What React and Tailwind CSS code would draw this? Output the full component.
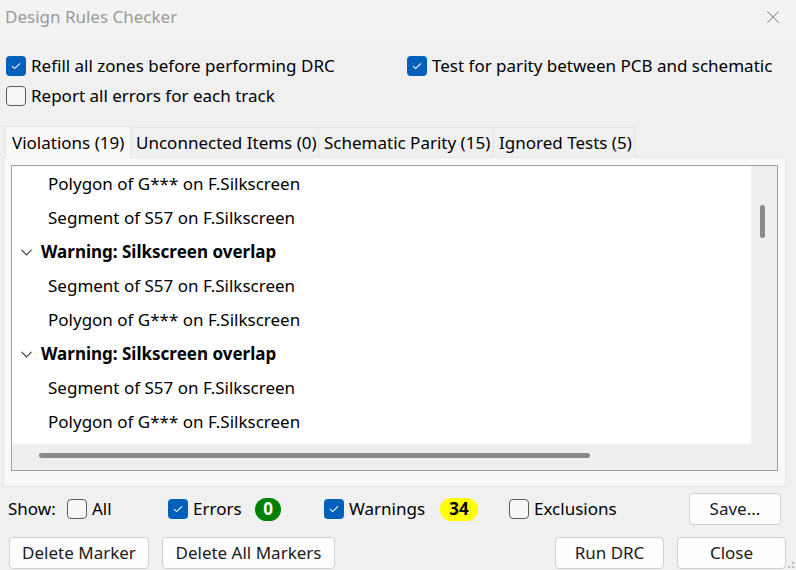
import { ChevronDown, X } from 'lucide-react'

const FONT = { fontFamily: '"Noto Sans", "Open Sans", sans-serif' }

function Box({ checked }) {
  if (checked) return (
    <span className="w-[20px] h-[20px] rounded-[4px] bg-[#005fb8] flex items-center justify-center shrink-0">
      <svg width="12" height="10" viewBox="0 0 12 10" fill="none">
        <path d="M2 5.2 L4.6 7.6 L10 2.4" stroke="white" strokeWidth="1.1" />
      </svg>
    </span>
  )
  return <span className="w-[20px] h-[20px] rounded-[4px] border border-[#5d5d5d] bg-[#f7f7f7] shrink-0" />
}

function Check({ checked, label, className = '' }) {
  return (
    <div className={`flex items-center gap-[5px] leading-[20px] whitespace-nowrap ${className}`}>
      <Box checked={checked} />
      <span>{label}</span>
    </div>
  )
}

const TABS = [
  ['Violations (19)', 'w-[126px]', true],
  ['Unconnected Items (0)', 'w-[188px]'],
  ['Schematic Parity (15)', 'w-[175px]'],
  ['Ignored Tests (5)', 'w-[141px]'],
]

const ROWS = [
  ['item', 'Polygon of G*** on F.Silkscreen'],
  ['item', 'Segment of S57 on F.Silkscreen'],
  ['head', 'Warning: Silkscreen overlap'],
  ['item', 'Segment of S57 on F.Silkscreen'],
  ['item', 'Polygon of G*** on F.Silkscreen'],
  ['head', 'Warning: Silkscreen overlap'],
  ['item', 'Segment of S57 on F.Silkscreen'],
  ['item', 'Polygon of G*** on F.Silkscreen'],
]

function Btn({ children, className = '' }) {
  return (
    <button className={`h-[32px] rounded-[4px] bg-[#fdfdfd] border border-[#d0d0d0] text-[17px] text-[#1a1a1a] whitespace-nowrap ${className}`}>
      {children}
    </button>
  )
}

export default function App() {
  return (
    <div className="w-[796px] h-[570px] bg-[#f0f0f0] text-[17px] text-black flex flex-col relative overflow-hidden" style={FONT}>
      {/* Title bar */}
      <div className="h-[38px] shrink-0 bg-[#f3f3f3] flex items-center justify-between pl-[5px] pr-[12px] pb-[4px]">
        <span className="text-[17px] text-[#9a9a9a]">Design Rules Checker</span>
        <X size={22} strokeWidth={1.1} className="text-[#8a8a8a]" />
      </div>

      {/* Options */}
      <div className="flex pl-[6px] pt-[18px]">
        <div className="flex flex-col gap-[10px] w-[401px]">
          <Check checked label="Refill all zones before performing DRC" />
          <Check label="Report all errors for each track" />
        </div>
        <Check checked label="Test for parity between PCB and schematic" className="self-start" />
      </div>

      {/* Tabs */}
      <div className="flex items-end pl-[5px] mt-[19px] h-[32px] shrink-0">
        {TABS.map(([t, w, active]) => (
          <div key={t}
            className={active
              ? `${w} h-[32px] px-[6px] bg-[#f9f9f9] border border-b-0 border-[#e5e5e5] flex items-center whitespace-nowrap relative z-10 -mb-px`
              : `${w} h-[30px] px-[5px] bg-[#f0f0f0] border border-b-0 border-l-0 border-[#e3e3e3] flex items-center whitespace-nowrap`}>
            {t}
          </div>
        ))}
      </div>

      {/* Tab panel */}
      <div className="mx-[3px] w-[783px] h-[330px] shrink-0 bg-[#f9f9f9] border border-[#e5e5e5] p-[7px] pb-[16px]">
        <div className="w-[767px] h-[306px] border border-[#a0a0a0] bg-[#efefef] grid grid-cols-[739px_25px] grid-rows-[278px_25px]">
          <div className="bg-white pt-[1px] overflow-hidden">
            {ROWS.map(([kind, text], i) => kind === 'head' ? (
              <div key={i} className="h-[34px] flex items-center pl-[5px] font-bold">
                <ChevronDown size={19} strokeWidth={1.3} className="mr-[5px] text-[#333]" />
                {text}
              </div>
            ) : (
              <div key={i} className="h-[34px] flex items-center pl-[36px]">{text}</div>
            ))}
          </div>
          <div className="relative">
            <div className="absolute left-[9px] top-[39px] w-[5px] h-[33px] rounded-full bg-[#8a8a8a]" />
          </div>
          <div className="relative">
            <div className="absolute left-[27px] top-[9px] h-[5px] w-[551px] rounded-full bg-[#8a8a8a]" />
          </div>
          <div />
        </div>
      </div>

      {/* Show filters */}
      <div className="flex items-center h-[32px] mt-[6px] pl-[8px] shrink-0">
        <span className="w-[59px]">Show:</span>
        <Check label="All" className="w-[101px]" />
        <Check checked label="Errors" className="w-[87px]" />
        <span className="w-[26px] h-[23px] rounded-full bg-[#008000] text-white font-bold flex items-center justify-center text-[17px]">0</span>
        <Check checked label="Warnings" className="ml-[43px] w-[116px]" />
        <span className="w-[38px] h-[23px] rounded-full bg-[#ffff00] text-black font-bold flex items-center justify-center text-[17px]">34</span>
        <Check label="Exclusions" className="ml-[31px]" />
        <Btn className="ml-auto mr-[15px] w-[92px]">Save...</Btn>
      </div>

      {/* Buttons */}
      <div className="flex items-center mt-[12px] pl-[9px] shrink-0">
        <Btn className="w-[140px]">Delete Marker</Btn>
        <Btn className="w-[173px] ml-[13px]">Delete All Markers</Btn>
        <Btn className="w-[109px] ml-auto">Run DRC</Btn>
        <Btn className="w-[109px] ml-[13px] mr-[10px] border-[#0067c0]">Close</Btn>
      </div>

      {/* resize grip */}
      <svg className="absolute right-[2px] bottom-[2px]" width="6" height="6" viewBox="0 0 6 6">
        <rect x="4" y="0" width="2" height="2" fill="#bdbdbd" />
        <rect x="0" y="4" width="2" height="2" fill="#bdbdbd" />
        <rect x="4" y="4" width="2" height="2" fill="#bdbdbd" />
      </svg>
    </div>
  )
}
